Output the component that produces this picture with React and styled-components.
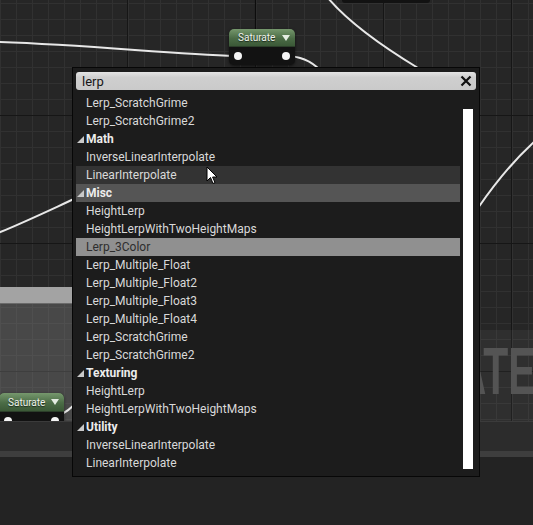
import styled, { createGlobalStyle } from 'styled-components';

const GlobalStyle = createGlobalStyle`
  html, body {
    margin: 0;
    background: #232323;
  }
`;

const Page = styled.div`
  position: relative;
  width: 533px;
  height: 525px;
  overflow: hidden;
  display: flex;
  flex-direction: column;
  font-family: Roboto, "Liberation Sans", sans-serif;
`;

const Canvas = styled.div`
  position: relative;
  height: 421px;
  flex-shrink: 0;
  overflow: hidden;
  background-color: #262626;
  background-image:
    linear-gradient(#161616 1px, transparent 1px),
    linear-gradient(90deg, #161616 1px, transparent 1px),
    linear-gradient(#313131 1px, transparent 1px),
    linear-gradient(90deg, #313131 1px, transparent 1px);
  background-size: 128px 128px, 128px 128px, 16px 16px, 16px 16px;
  background-position: 0 115px, 127px 0, 0 3px, 0 15px;
`;

const Wires = styled.svg`
  position: absolute;
  inset: 0;
  width: 100%;
  height: 100%;
`;

const NodeShadow = styled.div`
  position: absolute;
  left: 342px;
  top: -4px;
  width: 88px;
  height: 7px;
  border-radius: 3px;
  background: #121212;
`;

const CommentBox = styled.div`
  position: absolute;
  left: ${({ $x }) => $x}px;
  top: ${({ $y }) => $y}px;
  width: ${({ $w }) => $w}px;
  height: ${({ $h }) => $h}px;
  display: flex;
  flex-direction: column;
  background: ${({ $tint }) => $tint};
`;

const CommentHeader = styled.div`
  height: 16px;
  flex-shrink: 0;
  background: #a3a3a3;
  border-bottom: 1px solid #6a6a6a;
`;

const CommentTitle = styled.div`
  flex: 1;
  display: flex;
  justify-content: flex-end;
  align-items: flex-start;
  padding-top: 8px;
  font-family: "Liberation Sans", sans-serif;
  font-weight: bold;
  font-size: 66px;
  line-height: 66px;
  color: #545454;
  white-space: nowrap;

  span {
    transform: scaleX(0.62);
    transform-origin: right center;
  }
`;

const GraphNode = styled.div`
  position: absolute;
  left: ${({ $x }) => $x}px;
  top: ${({ $y }) => $y}px;
  width: ${({ $w }) => $w}px;
  display: flex;
  flex-direction: column;
  border-radius: 5px;
  overflow: hidden;
  background: #121212;
  box-shadow: 0 1px 3px rgba(0, 0, 0, 0.6);
`;

const NodeHeader = styled.div`
  height: ${({ $h }) => $h}px;
  display: flex;
  align-items: center;
  justify-content: space-between;
  padding: 0 5px 0 9px;
  background: linear-gradient(#76986d, #4b6c46 55%, #3b5937);
  border-bottom: 1px solid #2c3f2a;
`;

const NodeTitle = styled.span`
  font-size: 10px;
  color: #eef3ec;
  text-shadow: 0 1px 1px rgba(0, 0, 0, 0.6);
`;

const NodeBody = styled.div`
  height: 18px;
  display: flex;
  align-items: center;
  justify-content: space-between;
  padding: 0 5px;
`;

const Pin = styled.span`
  width: 8px;
  height: 8px;
  border-radius: 50%;
  background: #f4f4f4;
`;

const BottomPanel = styled.div`
  flex: 1;
  display: flex;
  flex-direction: column;
  background: #232323;
`;

const PanelStrip = styled.div`
  height: ${({ $h }) => $h}px;
  background: ${({ $c }) => $c};
  border-top: ${({ $edge }) => ($edge ? '1px solid #3b3b3b' : 'none')};
`;

const Popup = styled.div`
  position: absolute;
  left: 72px;
  top: 67px;
  width: 400px;
  height: 404px;
  display: flex;
  flex-direction: column;
  gap: 4px;
  padding: 4px 3px 0;
  border: 1px solid #070707;
  background: #1c1c1c;
`;

const SearchBox = styled.div`
  height: 18px;
  flex-shrink: 0;
  display: flex;
  align-items: center;
  justify-content: space-between;
  padding: 0 4px 0 6px;
  border-radius: 3px;
  background: linear-gradient(#e4e4e4, #cfcfcf 30%, #cacaca);
`;

const SearchText = styled.span`
  font-size: 13px;
  color: #161616;
`;

const ListArea = styled.div`
  display: flex;
  gap: 3px;
`;

const Rows = styled.div`
  width: 384px;
  display: flex;
  flex-direction: column;
`;

const rowBg = {
  hover: '#333333',
  category: '#555555',
  selected: '#909090',
};

const Row = styled.div`
  height: 18px;
  display: flex;
  align-items: center;
  gap: 2px;
  padding-left: ${({ $header }) => ($header ? 1 : 10)}px;
  font-size: 12px;
  font-weight: ${({ $header }) => ($header ? 'bold' : 'normal')};
  color: ${({ $state, $header }) =>
    $state === 'selected' ? '#2e2e2e' : $header ? '#ececec' : '#d9d9d9'};
  background: ${({ $state }) => rowBg[$state] || 'transparent'};
  white-space: nowrap;
`;

const Scrollbar = styled.div`
  margin-top: 15px;
  width: 10px;
  height: 360px;
  background: #ffffff;
`;

const Cursor = styled.svg`
  position: absolute;
  left: 206px;
  top: 166px;
`;

const Expander = () => (
  <svg width="7" height="7" viewBox="0 0 7 7">
    <polygon points="7,0 7,7 0,7" fill="#c9c9c9" />
  </svg>
);

const ClearIcon = () => (
  <svg width="12" height="12" viewBox="0 0 12 12">
    <path d="M1.5 1.5 L10.5 10.5 M10.5 1.5 L1.5 10.5" stroke="#111" strokeWidth="2.2" />
  </svg>
);

const DropArrow = () => (
  <svg width="8" height="6" viewBox="0 0 8 6">
    <polygon points="0,0 8,0 4,6" fill="#e4ece2" />
  </svg>
);

const SaturateNode = ({ x, y, w, head = 17 }) => (
  <GraphNode $x={x} $y={y} $w={w}>
    <NodeHeader $h={head}>
      <NodeTitle>Saturate</NodeTitle>
      <DropArrow />
    </NodeHeader>
    <NodeBody>
      <Pin />
      <Pin />
    </NodeBody>
  </GraphNode>
);

const items = [
  { label: 'Lerp_ScratchGrime' },
  { label: 'Lerp_ScratchGrime2' },
  { label: 'Math', header: true },
  { label: 'InverseLinearInterpolate' },
  { label: 'LinearInterpolate', state: 'hover' },
  { label: 'Misc', header: true, state: 'category' },
  { label: 'HeightLerp' },
  { label: 'HeightLerpWithTwoHeightMaps' },
  { label: 'Lerp_3Color', state: 'selected' },
  { label: 'Lerp_Multiple_Float' },
  { label: 'Lerp_Multiple_Float2' },
  { label: 'Lerp_Multiple_Float3' },
  { label: 'Lerp_Multiple_Float4' },
  { label: 'Lerp_ScratchGrime' },
  { label: 'Lerp_ScratchGrime2' },
  { label: 'Texturing', header: true },
  { label: 'HeightLerp' },
  { label: 'HeightLerpWithTwoHeightMaps' },
  { label: 'Utility', header: true },
  { label: 'InverseLinearInterpolate' },
  { label: 'LinearInterpolate' },
];

export default function App() {
  return (
    <Page>
      <GlobalStyle />
      <Canvas>
        <CommentBox $x={-10} $y={287} $w={300} $h={140} $tint="rgba(130, 130, 130, 0.38)">
          <CommentHeader />
        </CommentBox>
        <CommentBox $x={260} $y={330} $w={276} $h={100} $tint="rgba(255, 255, 255, 0.045)">
          <CommentTitle>
            <span>SATURATE</span>
          </CommentTitle>
        </CommentBox>
        <NodeShadow />
        <Wires viewBox="0 0 533 421">
          <g fill="none" strokeLinecap="round">
            <path d="M255.5 0 L255.5 30" stroke="#0c0c0c" strokeWidth="1.2" />
            <path d="M-2 42 C 90 45 170 54 236 56" stroke="#e8e8e8" strokeWidth="2" />
            <path d="M286 56 C 300 56 310 60 320 70" stroke="#e8e8e8" strokeWidth="2" />
            <path d="M328 -2 C 350 24 385 48 418 68" stroke="#e8e8e8" strokeWidth="2" />
            <path d="M478 208 C 496 182 514 160 535 141" stroke="#e8e8e8" strokeWidth="2" />
            <path d="M-2 233 C 25 222 50 210 74 199" stroke="#e8e8e8" strokeWidth="2" />
            <path d="M62 414 C 66 412 70 409 74 405" stroke="#e8e8e8" strokeWidth="2" />
          </g>
        </Wires>
        <SaturateNode x={229} y={29} w={66} />
        <SaturateNode x={-1} y={393} w={65} head={18} />
      </Canvas>
      <BottomPanel>
        <PanelStrip $h={29} $c="#2c2c2c" $edge />
        <PanelStrip $h={6} $c="#3e3e3e" />
      </BottomPanel>

      <Popup>
        <SearchBox>
          <SearchText>lerp</SearchText>
          <ClearIcon />
        </SearchBox>
        <ListArea>
          <Rows>
            {items.map((item, i) => (
              <Row key={i} $header={item.header} $state={item.state}>
                {item.header && <Expander />}
                {item.label}
              </Row>
            ))}
          </Rows>
          <Scrollbar />
        </ListArea>
      </Popup>

      <Cursor width="12" height="19" viewBox="0 0 12 19">
        <path
          d="M1 1 L1 15 L4.5 11.5 L7 17.5 L9 16.6 L6.6 11 L11 11 Z"
          fill="#ffffff"
          stroke="#000000"
          strokeWidth="1"
          strokeLinejoin="round"
        />
      </Cursor>
    </Page>
  );
}
